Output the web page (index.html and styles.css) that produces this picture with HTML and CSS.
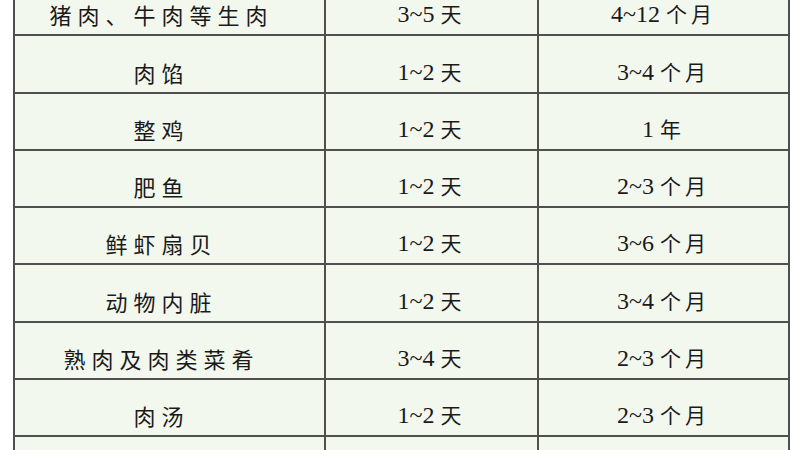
FILE: index.html
```html
<!DOCTYPE html>
<html lang="zh">
<head>
<meta charset="utf-8">
<title>肉类储存时间</title>
<link rel="stylesheet" href="styles.css">
</head>
<body>
<table class="grid">
  <colgroup>
    <col class="c1"><col class="c2"><col class="c3">
  </colgroup>
  <tbody>
    <tr><td class="name">猪肉、牛肉等生肉</td><td>3~5 <span class="u">天</span></td><td>4~12 <span class="u">个月</span></td></tr>
    <tr><td class="name">肉馅</td><td>1~2 <span class="u">天</span></td><td>3~4 <span class="u">个月</span></td></tr>
    <tr><td class="name">整鸡</td><td>1~2 <span class="u">天</span></td><td>1 <span class="u">年</span></td></tr>
    <tr><td class="name">肥鱼</td><td>1~2 <span class="u">天</span></td><td>2~3 <span class="u">个月</span></td></tr>
    <tr><td class="name">鲜虾扇贝</td><td>1~2 <span class="u">天</span></td><td>3~6 <span class="u">个月</span></td></tr>
    <tr><td class="name">动物内脏</td><td>1~2 <span class="u">天</span></td><td>3~4 <span class="u">个月</span></td></tr>
    <tr><td class="name">熟肉及肉类菜肴</td><td>3~4 <span class="u">天</span></td><td>2~3 <span class="u">个月</span></td></tr>
    <tr><td class="name">肉汤</td><td>1~2 <span class="u">天</span></td><td>2~3 <span class="u">个月</span></td></tr>
    <tr><td class="name"></td><td></td><td></td></tr>
  </tbody>
</table>
</body>
</html>
```
FILE: styles.css
```css
html, body {
  margin: 0;
  padding: 0;
  background: #ffffff;
  overflow: hidden;
}
body {
  width: 800px;
  height: 450px;
}
.grid {
  border-collapse: collapse;
  table-layout: fixed;
  width: 775px;
  margin: -23px 0 0 13px;
  background: #f3f8ef;
  color: #1a1a1a;
  font-family: "Liberation Serif", "Noto Sans CJK SC", serif;
  font-size: 24px;
}
.c1 { width: 311px; }
.c2 { width: 213px; }
.c3 { width: 251px; }
.grid td {
  box-sizing: border-box;
  height: 57.3px;
  border: 2px solid #4f4f4f;
  text-align: center;
  vertical-align: bottom;
  padding: 0 0 8px 0;
  line-height: 24px;
  white-space: nowrap;
}
.grid td.name {
  font-family: "Noto Sans CJK SC", sans-serif;
  font-size: 22px;
  letter-spacing: 6px;
  padding-right: 16px;
}
.u {
  font-family: "Noto Sans CJK SC", sans-serif;
  font-size: 21px;
  letter-spacing: 4px;
}
```
